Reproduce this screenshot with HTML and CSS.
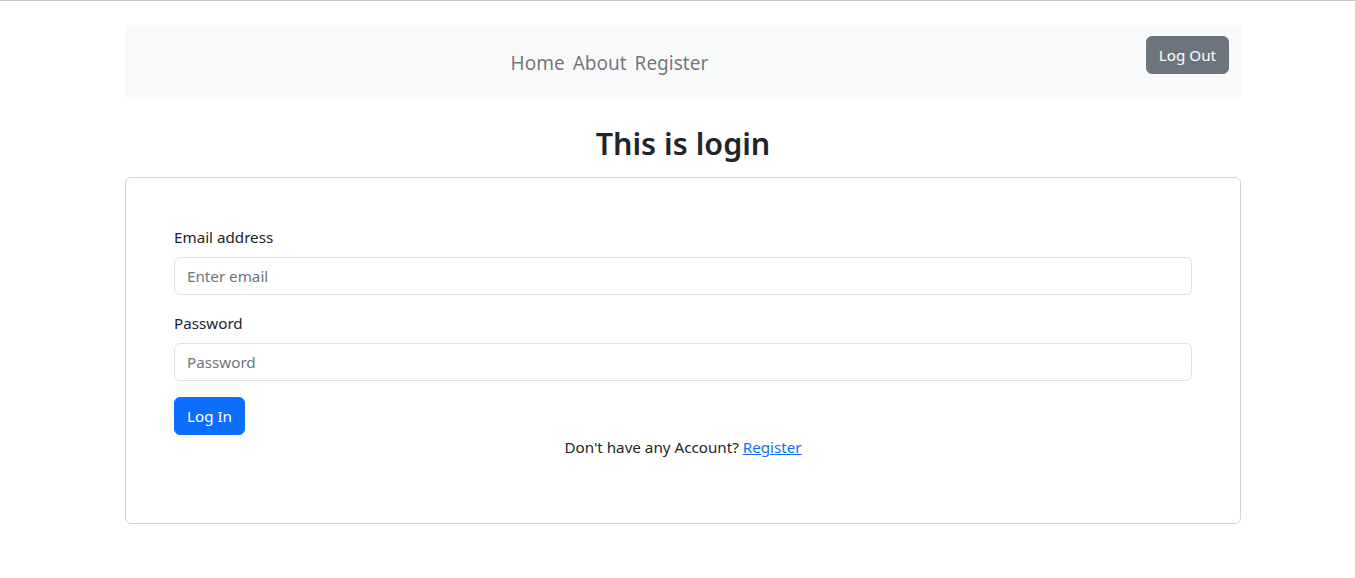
FILE: index.html
```html
<!DOCTYPE html>
<html lang="en">
<head>
<meta charset="utf-8">
<title>Login</title>
<link rel="stylesheet" href="styles.css">
</head>
<body>
<div class="container">
  <nav class="navbar">
    <ul class="nav-links">
      <li><a href="#" class="nav-link">Home</a></li>
      <li><a href="#" class="nav-link">About</a></li>
      <li><a href="#" class="nav-link">Register</a></li>
    </ul>
    <button class="btn btn-secondary" type="button">Log Out</button>
  </nav>
  <h2 class="title">This is login</h2>
  <div class="card">
    <form class="login-form">
      <div class="field">
        <label class="form-label" for="email">Email address</label>
        <input class="form-control" id="email" type="email" placeholder="Enter email">
      </div>
      <div class="field">
        <label class="form-label" for="password">Password</label>
        <input class="form-control" id="password" type="password" placeholder="Password">
      </div>
      <div class="actions">
        <button class="btn btn-primary" type="submit">Log In</button>
      </div>
      <p class="signup">Don't have any Account? <a href="#" class="link">Register</a></p>
    </form>
  </div>
</div>
</body>
</html>
```

FILE: styles.css
```css
* { box-sizing: border-box; }

html, body {
  margin: 0;
  padding: 0;
  background: #fff;
}

body {
  border-top: 1px solid #c9c9c9;
  font-family: "Noto Sans", "Open Sans", sans-serif;
  font-size: 15.2px;
  line-height: 24px;
  color: #212529;
}

.container {
  width: 1116px;
  margin: 24px 0 0 125px;
}

.navbar {
  display: flex;
  align-items: flex-start;
  height: 72px;
  background: #f8f9fa;
  padding: 11px 12px 0 12px;
}

.nav-links {
  flex: 1;
  display: flex;
  justify-content: center;
  gap: 8px;
  list-style: none;
  margin: 0 64px 0 0;
  padding: 12px 0 0 0;
}

.nav-link {
  font-size: 19px;
  line-height: 30px;
  color: rgba(0, 0, 0, 0.55);
  text-decoration: none;
}

.btn {
  font-family: inherit;
  font-size: 15.2px;
  line-height: 24px;
  height: 38px;
  padding: 6px 12px;
  border: 1px solid transparent;
  border-radius: 6px;
  color: #fff;
  cursor: pointer;
}

.btn-secondary {
  background: #6c757d;
  border-color: #6c757d;
}

.btn-primary {
  background: #0d6efd;
  border-color: #0d6efd;
}

.title {
  margin: 26px 0 14px 0;
  text-align: center;
  font-size: 30.5px;
  line-height: 40px;
  font-weight: 600;
  color: #212529;
}

.card {
  border: 1px solid #d4d4d4;
  border-radius: 6px;
  padding: 47px 48px 48px 48px;
}

.field {
  display: flex;
  flex-direction: column;
  margin-bottom: 16px;
}

.form-label {
  margin-bottom: 8px;
  line-height: 24px;
}

.form-control {
  height: 38px;
  width: 100%;
  padding: 6px 12px;
  font-family: inherit;
  font-size: 15.2px;
  line-height: 24px;
  color: #212529;
  background: #fff;
  border: 1px solid #dee2e6;
  border-radius: 6px;
  outline: none;
}

.form-control::placeholder {
  color: #6c757d;
  opacity: 1;
}

.actions {
  display: flex;
}

.signup {
  margin: 0 0 16px 0;
  text-align: center;
}

.link {
  color: #0d6efd;
  text-decoration: underline;
}
```
